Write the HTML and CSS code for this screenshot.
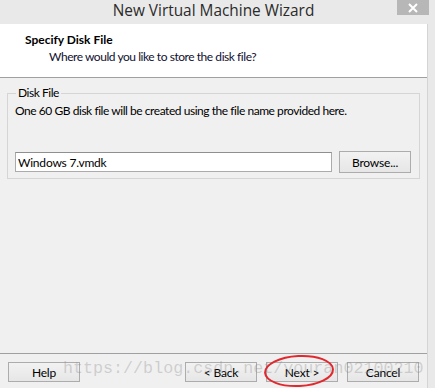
FILE: index.html
```html
<!DOCTYPE html>
<html lang="en">
  <head>
    <meta charset="UTF-8" />
    <title>New Virtual Machine Wizard</title>
    <link rel="stylesheet" href="styles.css">
  </head>
  <body>
    <div class="window">
      <div class="titlebar">
        <span></span>
        <div class="title">New Virtual Machine Wizard</div>
        <div class="close">
          <svg width="12" height="10" viewBox="0 0 12 10">
            <path d="M2 1 L10 9 M10 1 L2 9" stroke="#fff" stroke-width="2" />
          </svg>
        </div>
      </div>
      <div class="client">
        <div class="header">
          <div class="heading">Specify Disk File</div>
          <div class="subheading">Where would you like to store the disk file?</div>
        </div>
        <div class="content">
          <fieldset class="group">
            <legend>Disk File</legend>
            <p class="info">One 60 GB disk file will be created using the file name provided here.</p>
            <div class="file-row">
              <input class="file-input" type="text" value="Windows 7.vmdk" />
              <button class="btn">Browse...</button>
            </div>
          </fieldset>
        </div>
        <div class="footer">
          <button class="btn">Help</button>
          <span class="spacer"></span>
          <button class="btn">&lt; Back</button>
          <button class="btn">Next &gt;</button>
          <button class="btn">Cancel</button>
          <!-- watermark + hand-drawn circle from the screenshot -->
          <div class="watermark">https://blog.csdn.net/youran02100210</div>
          <svg class="mark" width="74" height="36" viewBox="0 0 74 36">
            <ellipse cx="37" cy="18" rx="34" ry="15" fill="none" stroke="#e0282e" stroke-width="2" transform="rotate(-3 37 18)" />
          </svg>
        </div>
      </div>
    </div>
  </body>
</html>
```

FILE: styles.css
```css
body {
  margin: 0;
  background-color: #e9e9e9;
  font-family: "Lato", "Open Sans", sans-serif;
  font-size: 12px;
  letter-spacing: -0.45px;
  color: #000;
}
.window {
  width: 435px;
  height: 388px;
  overflow: hidden;
}
.titlebar {
  height: 24px;
  display: grid;
  grid-template-columns: 1fr auto 1fr;
  align-items: start;
}
.title {
  font-family: "Open Sans", sans-serif;
  font-size: 15.4px;
  letter-spacing: 0;
  line-height: 20px;
  padding-top: 1px;
  margin-right: 8px;
  color: #2b2b2b;
}
.close {
  justify-self: end;
  margin-right: 6px;
  width: 32px;
  height: 15px;
  background-color: #b7b7b7;
  display: flex;
  align-items: center;
  justify-content: center;
}
.client {
  width: 427px;
  height: 364px;
  background-color: #f0f0f0;
  border-right: 1px solid #d4d4d4;
  display: flex;
  flex-direction: column;
}
.header {
  background-color: #fff;
  border-bottom: 1px solid #a0a0a0;
  box-sizing: border-box;
  height: 54px;
  padding: 9px 0 0 25px;
}
.heading {
  font-weight: bold;
  letter-spacing: 0;
  line-height: 14px;
}
.subheading {
  margin-top: 3px;
  padding-left: 24px;
  line-height: 14px;
  color: #101030;
}
.content {
  flex: 1;
  padding: 8px 8px 0 7px;
}
.group {
  margin: 0;
  padding: 4px 8px 5px 7px;
  border: 1px solid #d5d5d5;
  width: 413px;
  box-sizing: border-box;
}
.group legend {
  padding: 0 2px;
  margin-left: 1px;
  line-height: 14px;
}
.info {
  margin: 0;
  line-height: 14px;
}
.file-row {
  margin-top: 33px;
  display: flex;
  align-items: center;
  gap: 7px;
}
.file-input {
  width: 317px;
  height: 20px;
  box-sizing: border-box;
  border: 1px solid #ababab;
  border-top-color: #8e8f8f;
  padding: 0 2px;
  font-family: inherit;
  font-size: 12px;
  letter-spacing: -0.2px;
  outline: none;
}
.btn {
  width: 72px;
  height: 22px;
  box-sizing: border-box;
  border: 1px solid #acacac;
  background: linear-gradient(#f2f2f2, #e6e6e6);
  font-family: inherit;
  font-size: 12px;
  letter-spacing: -0.2px;
  color: #000;
  padding: 0;
}
.footer {
  position: relative;
  height: 35px;
  box-sizing: border-box;
  border-top: 1px solid #a0a0a0;
  padding: 8px 8px 0 8px;
  display: flex;
  align-items: flex-start;
  gap: 9px;
}
.footer .btn {
  height: 20px;
}
.spacer {
  flex: 1;
}
.watermark {
  position: absolute;
  left: 63px;
  top: 5px;
  font-family: "Liberation Mono", monospace;
  font-size: 16.7px;
  letter-spacing: 0;
  line-height: 20px;
  color: rgba(140, 140, 140, 0.35);
  pointer-events: none;
}
.mark {
  position: absolute;
  left: 262px;
  top: -1px;
}
```
